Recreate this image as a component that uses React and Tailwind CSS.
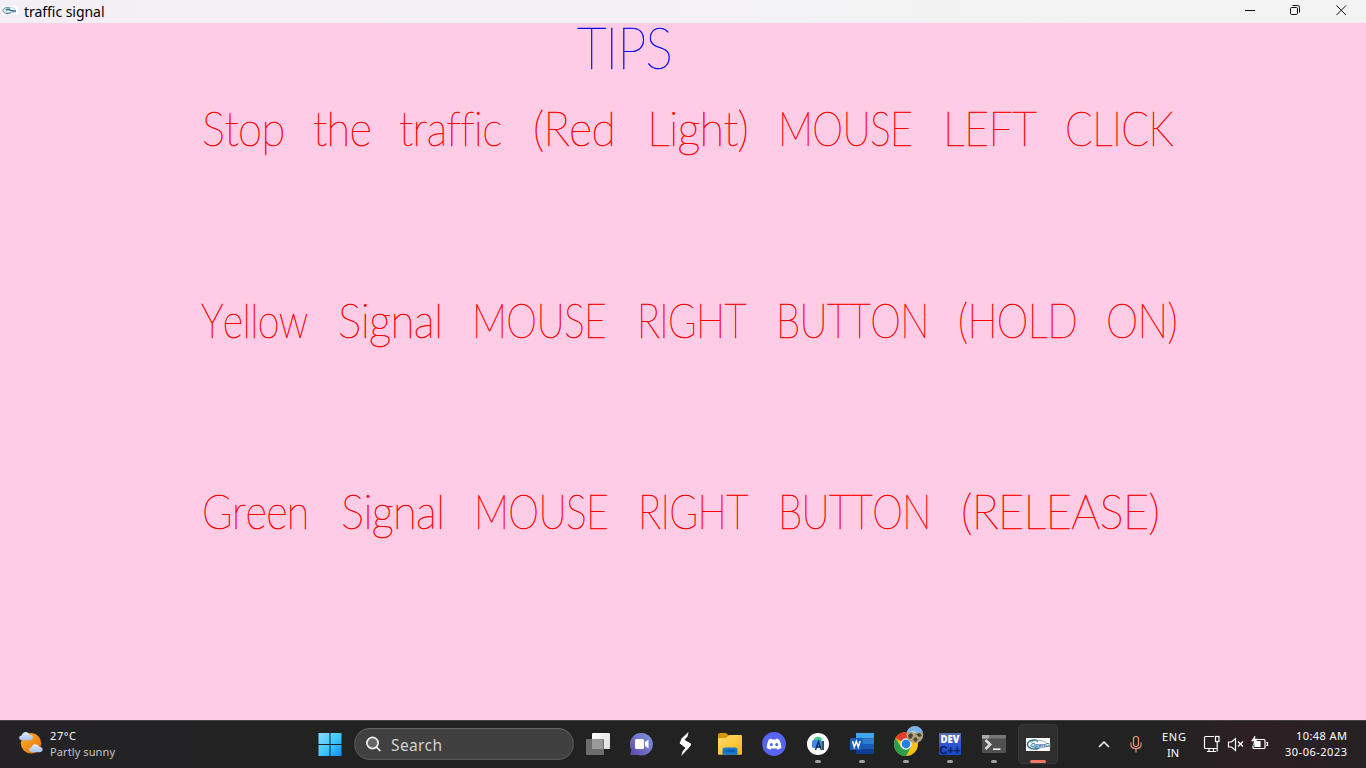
import { useLayoutEffect, useRef, useState } from "react";

/* Spreads the letters of a label so that it fills the given width. */
function Fit({ text, width, gap = 0, className = "" }) {
  const ref = useRef(null);
  const [spacing, setSpacing] = useState(0);
  useLayoutEffect(() => {
    const measure = () => {
      const el = ref.current;
      if (!el) return;
      el.style.letterSpacing = "0px";
      const natural = el.getBoundingClientRect().width;
      const next = (width - natural) / Math.max(1, text.length - 1);
      el.style.letterSpacing = next + "px";
      setSpacing(next);
    };
    measure();
    document.fonts?.ready.then(measure);
  }, [text, width]);
  return (
    <span className={"block shrink-0 whitespace-pre " + className} style={{ width, marginLeft: gap }}>
      <span ref={ref} className="inline-block" style={{ letterSpacing: spacing }}>{text}</span>
    </span>
  );
}

/* Stretches or condenses a whole word to the given width. */
function Word({ text, width, gap = 0 }) {
  const ref = useRef(null);
  const [scale, setScale] = useState(1);
  useLayoutEffect(() => {
    const measure = () => ref.current && setScale((width + 4) / ref.current.offsetWidth);
    measure();
    document.fonts?.ready.then(measure);
  }, [text, width]);
  return (
    <span className="block shrink-0 whitespace-pre" style={{ width, marginLeft: gap }}>
      <span
        ref={ref}
        className="-ml-[2px] inline-block origin-left tracking-[-0.8px]"
        style={{ transform: `scaleX(${scale})` }}
      >
        {text}
      </span>
    </span>
  );
}

/* Each word: [text, left, right] */
const LINES = [
  [["Stop", 204, 282], ["the", 315, 369], ["traffic", 401, 500], ["(Red", 535, 613], ["Light)", 649, 746], ["MOUSE", 780, 910], ["LEFT", 945, 1034], ["CLICK", 1067, 1171]],
  [["Yellow", 203, 306], ["Signal", 340, 440], ["MOUSE", 474, 604], ["RIGHT", 639, 744], ["BUTTON", 778, 927], ["(HOLD", 960, 1075], ["ON)", 1108, 1175]],
  [["Green", 204, 307], ["Signal", 343, 442], ["MOUSE", 476, 606], ["RIGHT", 640, 746], ["BUTTON", 780, 929], ["(RELEASE)", 963, 1157]],
];

function TipLine({ words }) {
  return (
    <p className="flex h-[191.5px] shrink-0 text-[48px] leading-[56px] text-[#ff0000]">
      {words.map(([text, left, right], i) => (
        <Word key={i} text={text} width={right - left} gap={left - (i ? words[i - 1][2] : 0)} />
      ))}
    </p>
  );
}

function Slot({ children, open }) {
  return (
    <div className="flex h-12 w-11 shrink-0 flex-col items-center pt-3">
      <div className="flex h-6 w-6 items-center justify-center">{children}</div>
      {open && <div className="mt-1 h-[3px] w-1.5 rounded-full bg-[#a0a0a0]" />}
    </div>
  );
}

function OpenGL({ className, label }) {
  return (
    <svg viewBox="0 0 24 13" className={"overflow-visible " + className}>
      <rect width="24" height="13" fill="#fff" />
      <path d="M12 3.3C8 .6 1.4 2.8 1.5 6.6c.1 3.9 7 5.6 12 3.2" fill="none" stroke="#2b6c82" strokeWidth="1.4" />
      <path d="M5 4.500c4-3.500 13-2.400 15 .4M4 7.300c3 3.200 11 3.100 17 1.200" fill="none" stroke="#6b9cac" strokeWidth=".8" />
      {label ? (
        <text x="5" y="8.600" fontSize="5.500" fontWeight="700" fontStyle="italic" fontFamily="Liberation Sans, sans-serif" fill="#285d70">OpenGL</text>
      ) : (
        <path d="M6 6q3-2 6 0t9 1" fill="none" stroke="#2b6c82" strokeWidth="2.200" />
      )}
    </svg>
  );
}

function Titlebar() {
  return (
    <header className="flex h-[23px] shrink-0 items-start bg-gradient-to-r from-[#f4eff6] to-[#f3f3f3] to-80% text-black">
      <OpenGL className="ml-0.5 mt-1.5 h-[9px] w-4" />
      <Fit text="traffic signal" width={80.5} gap={6} className="mt-px text-[14px] leading-[21px]" />
      <svg viewBox="0 0 146 23" className="ml-auto h-[23px] w-[146px]" fill="none" stroke="#111">
        <path d="M25 10.5h10" />
        <rect x="70.500" y="7.500" width="7" height="7" rx="1.200" />
        <path d="M72.500 5.500h4.800a2 2 0 0 1 2.200 2.200v4.800" />
        <path d="m116.500 5.500 9.500 9.500m0-9.500-9.500 9.500" />
      </svg>
    </header>
  );
}

function Weather() {
  return (
    <svg viewBox="0 0 24 24" className="ml-[19px] mt-[10px] h-6 w-6 shrink-0">
      <defs>
        <linearGradient id="sun" x1="0" y1="0" x2="1" y2="1"><stop stopColor="#f8b62c" /><stop offset="1" stopColor="#eb6b0b" /></linearGradient>
        <linearGradient id="cloud" x1="0" y1="0" x2="0" y2="1"><stop stopColor="#e5edfc" /><stop offset="1" stopColor="#a8c0ec" /></linearGradient>
      </defs>
      <circle cx="12" cy="12.300" r="10.200" fill="url(#sun)" />
      <path d="M3.200 9.200C-.8 9.200-.7 4.700 2.600 4.500 3.500-.1 9.400-.2 10.400 3.700c4.600-.2 4.700 5.500.4 5.500z" fill="url(#cloud)" />
      <path d="M13.200 21.200c-4 0-4-4.300-.7-4.700.8-4.300 6.400-4.400 7.400-.8 4.800-.2 4.900 5.500.8 5.500z" fill="url(#cloud)" />
    </svg>
  );
}

function Taskbar() {
  return (
    <footer className="flex h-12 shrink-0 border-t border-[#464344] bg-[linear-gradient(90deg,#242225_0%,#222_30%,#222_84%,#2d2024_92%,#262123_100%)] text-white">
      <div className="flex h-[47px] w-[308px]">
        <Weather />
        <div className="ml-[7px] mt-[7px] flex flex-col text-[11px] leading-4">
          <Fit text="27°C" width={26} />
          <Fit text="Partly sunny" width={65} className="text-[#c4c4c4]" />
        </div>
      </div>
      <div className="-mt-px flex h-12">
        <Slot>
          <svg viewBox="0 0 24 24" className="-ml-px h-6 w-6">
            <defs><linearGradient id="win" x1="0" y1="0" x2="1" y2="1"><stop stopColor="#8bdcff" /><stop offset=".5" stopColor="#43c8fc" /><stop offset="1" stopColor="#0a8eff" /></linearGradient></defs>
            <path d="M.5 1h11v11H.5zM12.500 1h11v11h-11zM.5 13h11v11H.5zM12.500 13h11v11h-11z" fill="url(#win)" />
          </svg>
        </Slot>
        <div className="ml-0.5 mt-2 flex h-8 w-[220px] items-center rounded-full border border-[#565656] border-t-[#666] bg-[#404040] pl-[10px]">
          <svg viewBox="0 0 18 18" className="h-[18px] w-[18px]" fill="none" stroke="#f0f0f0" strokeWidth="1.700" strokeLinecap="round"><circle cx="7.500" cy="8" r="5.600" fill="#666" /><path d="m11.700 12.300 3.200 3.200" /></svg>
          <Fit text="Search" width={51} gap={8} className="pt-px text-[15.500px] leading-8 text-[#d0d0d0]" />
        </div>
        <div className="ml-0.5 flex">
          <Slot>
            <svg viewBox="0 0 24 24" className="h-6 w-6">
              <defs><linearGradient id="pane" x1="0" x2="1" y1="0" y2="1"><stop stopColor="#fff" /><stop offset="1" stopColor="#ddd" /></linearGradient></defs>
              <rect x="6" y="1" width="18" height="16" rx="1" fill="url(#pane)" /><rect y="7" width="18" height="16" rx="1" fill="#6d6d6d" /><path d="M6 7h11v10H6z" fill="#999" />
            </svg>
          </Slot>
          <Slot>
            <svg viewBox="0 0 24 24" className="h-6 w-6">
              <defs><linearGradient id="chat" x1="1" x2="0" y1="0" y2="1"><stop stopColor="#7394dc" /><stop offset=".45" stopColor="#7775c8" /><stop offset="1" stopColor="#5549a8" /></linearGradient></defs>
              <path d="M12 1A11.300 11.300 0 1 1 8 23H0l1.500-5A11.300 11.300 0 0 1 12 1z" fill="url(#chat)" />
              <rect x="5" y="7" width="9" height="10" rx="1.500" fill="#fff" /><path d="m15 10 3.500-2.500v9L15 14z" fill="#fff" />
            </svg>
          </Slot>
          <Slot>
            <svg viewBox="0 0 24 24" className="-ml-0.5 h-6 w-6" fill="#fff">
              <path d="M15.500 0 14.700 4.300 11.500 7.700 17.800 12 15.800 16 8.200 24 9.500 19.500 12.800 15.500 6.800 11 8.500 6.500z" />
              <path d="M10.500 8.500 17.800 12l-1.500 3M6.800 11l6.500 5" stroke="#fff" />
            </svg>
          </Slot>
          <Slot>
            <svg viewBox="0 0 24 24" className="h-6 w-6">
              <defs><linearGradient id="folder" x1="0" x2="1" y1="0" y2="1"><stop stopColor="#ffdc70" /><stop offset="1" stopColor="#f8b414" /></linearGradient></defs>
              <path d="M0 3q0-2 2-2h6l3 3-2 3H0z" fill="#d79407" /><path d="M0 6h8l3-3h12q1 0 1 1v18q0 .7-.7.700H.7Q0 22.700 0 22z" fill="url(#folder)" />
              <path d="M4.500 22.700V18q0-2.500 2.500-2.500h10q2.500 0 2.500 2.500v4.700z" fill="#1477ca" /><path d="M7.500 19h9.500" stroke="#0a4e92" strokeWidth="1.200" />
            </svg>
          </Slot>
          <Slot>
            <svg viewBox="0 0 24 24" className="h-6 w-6">
              <circle cx="12" cy="12" r="11.900" fill="#5865f2" />
              <path d="M9.500 6.500 6.800 7.400Q4.700 11 4.600 15.700 6.500 17.300 8.600 17.700l1-1.500q2.400.7 4.800 0l1 1.500q2.100-.4 4-2-.1-4.700-2.200-8.300l-2.700-.9-.6 1.100h-3.800z" fill="#fff" />
              <ellipse cx="9.300" cy="12.600" rx="1.500" ry="1.700" fill="#5865f2" /><ellipse cx="14.700" cy="12.600" rx="1.500" ry="1.700" fill="#5865f2" />
            </svg>
          </Slot>
          <Slot open>
            <svg viewBox="0 0 24 24" className="h-6 w-6">
              <circle cx="12" cy="12" r="11" fill="#fff" /><path d="M7.500 8a4.700 4.700 0 0 1 9 0z" fill="#3bd487" />
              <rect x="6" y="8" width="10" height="8" rx="1.500" fill="#408ae5" />
              <path d="m9.500 18 3-8.500 2.800 8.500m-4.800-3h3.800" fill="none" stroke="#0b3152" strokeWidth="1.400" /><path d="M17 9v9" stroke="#0b3152" strokeWidth="1.700" />
            </svg>
          </Slot>
          <Slot open>
            <svg viewBox="0 0 24 24" className="h-6 w-6">
              <path d="M6 1h18v5.500H6z" fill="#41a5ee" /><path d="M6 6.500h18V12H6z" fill="#2b7cd3" /><path d="M6 12h18v5.500H6z" fill="#185abd" /><path d="M6 17.500h18V22H6z" fill="#103f91" />
              <rect y="6" width="12.500" height="12" rx="1" fill="#185abd" />
              <path d="m2.500 9 1.800 6L6.300 9.200l2 5.800L10.100 9" fill="none" stroke="#fff" strokeWidth="1.500" />
            </svg>
          </Slot>
          <Slot open>
            <svg viewBox="0 0 30 30" className="-mt-1.5 ml-1.5 h-[30px] w-[30px] shrink-0">
              <circle cx="12" cy="18" r="12" fill="#fbc116" />
              <path d="M12 18 1.600 12A12 12 0 0 1 22.400 12L12 13z" fill="#e33b2e" /><path d="M1.600 12A12 12 0 0 0 12 30l5-9-10 0z" fill="#2c9f4b" />
              <circle cx="12" cy="18" r="5.700" fill="#fff" /><circle cx="12" cy="18" r="4.400" fill="#2680eb" />
              <circle cx="20.800" cy="8.800" r="8.500" fill="#b0a37c" /><path d="M12.800 6a8.500 8.500 0 0 1 16 0l-5 1-4-.5z" fill="#79b4ec" />
              <path d="m14 9 3-2 2 2-1 3-3 1zM22 8l4-1 2 3-3 1zM19 13l3-2 2 3-3 2z" fill="#4a4730" /><path d="m17 5 3 2 3-1" fill="#e5dfc9" />
            </svg>
          </Slot>
          <Slot open>
            <svg viewBox="0 0 24 24" className="h-6 w-6">
              <defs><linearGradient id="dev" x1="0" x2="0" y1="0" y2="1"><stop stopColor="#5a6cae" /><stop offset=".5" stopColor="#3155d3" /><stop offset="1" stopColor="#1548c8" /></linearGradient></defs>
              <rect x="1" y="1" width="22" height="22" fill="url(#dev)" />
              <text x="2.500" y="10.700" fontFamily="Open Sans, sans-serif" fontWeight="800" fontSize="10.500" fill="#fff" textLength="19" lengthAdjust="spacingAndGlyphs">DEV</text>
              <text x="1.500" y="21.800" fontFamily="Liberation Sans, sans-serif" fontWeight="700" fontSize="11" fill="#0a1d4b" textLength="21" lengthAdjust="spacingAndGlyphs">C++</text>
            </svg>
          </Slot>
          <Slot open>
            <svg viewBox="0 0 24 24" className="h-6 w-6">
              <rect y="3" width="24" height="18" rx="1" fill="#505050" /><path d="M0 3h24v3.500H0z" fill="#777" /><path d="M0 3h7v3.500H0z" fill="#aaa" />
              <path d="m3.500 8 4.700 4.500-4.700 4.500" fill="none" stroke="#ddd" strokeWidth="2.500" /><path d="M11 17.200h7.500" stroke="#fff" strokeWidth="1.500" />
            </svg>
          </Slot>
          <div className="ml-0.5 mt-1 flex h-10 w-10 flex-col items-center rounded border border-[#373737] bg-[#2f2f2f] pt-[13px]">
            <OpenGL label className="h-[13px] w-6" />
            <div className="mt-[9px] h-[3px] w-4 shrink-0 rounded-full bg-[#f27966]" />
          </div>
        </div>
      </div>
      <div className="ml-auto flex h-[47px] text-[11px] leading-4">
        <svg viewBox="0 0 60 47" className="h-[47px] w-[60px]" fill="none">
          <path d="m15 26 5-5 5 5" stroke="#fff" strokeWidth="1.500" />
          <g stroke="#ed9878" strokeWidth="1.200"><rect x="49.500" y="15.500" width="5" height="10" rx="2.500" /><path d="M46.800 21.500v1.200q0 5 5.200 5t5.200-5v-1.200M52 27.700v3.800" /></g>
        </svg>
        <div className="flex w-[46px] flex-col pt-2">
          <Fit text="ENG" width={24} gap={18} />
          <Fit text="IN" width={12} gap={23} />
        </div>
        <svg viewBox="0 0 74 47" className="ml-[10px] h-[47px] w-[74px]" fill="none" stroke="#fff" strokeWidth="1.200">
          <path d="M14 15.500H5.500q-1 0-1 1v10q0 1 1 1H17M9 27.500v3M13.500 27.500v3M7 30.500h9" />
          <rect x="15.500" y="15.500" width="3.500" height="5" /><path d="M17.200 20.500v10" />
          <path d="M28.500 21h3l4-3.500v12l-4-3.500h-3z" /><path d="m38 20.500 5 5m0-5-5 5" />
          <path d="M57 18.500h7q1 0 1 1v7q0 1-1 1H54q-1 0-1-1v-2M66 21.500h1.500v3H66" /><path d="M55 20.500h5v5h-5z" fill="#fff" /><path d="m55 15-3.500 5h3l-1 4 4-6h-3z" fill="#fff" strokeWidth=".6" />
        </svg>
        <div className="ml-[10px] flex w-[82px] flex-col pt-[7px]">
          <Fit text="10:48 AM" width={51} gap={12} />
          <Fit text="30-06-2023" width={62} gap={1} />
        </div>
      </div>
    </footer>
  );
}

export default function App() {
  return (
    <div className="flex h-[768px] w-[1366px] flex-col overflow-hidden bg-[#ffcce6] font-['Noto_Sans',sans-serif]">
      <Titlebar />
      <main className="flex min-h-0 flex-1 flex-col font-['Lato',sans-serif] font-thin antialiased [font-kerning:none] [font-variant-ligatures:none] [-webkit-text-stroke:0.55px_currentColor]">
        <h1 className="flex h-[77px] shrink-0 text-[57px] leading-[49px] text-[#0000ff]">
          <Word text="TIPS" width={91} gap={579} />
        </h1>
        {LINES.map((words, i) => <TipLine key={i} words={words} />)}
      </main>
      <Taskbar />
    </div>
  );
}
